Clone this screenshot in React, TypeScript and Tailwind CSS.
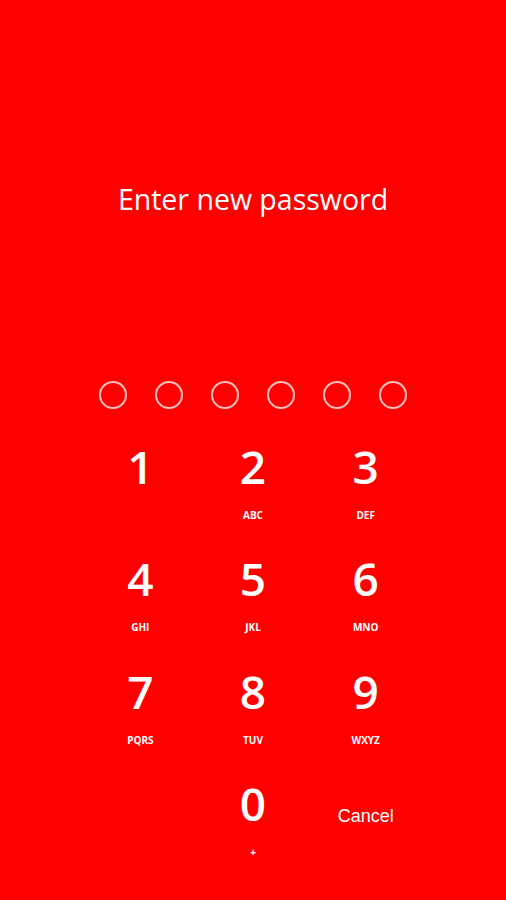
const keys: Array<{ digit: string; letters: string }> = [
  { digit: "1", letters: "" },
  { digit: "2", letters: "ABC" },
  { digit: "3", letters: "DEF" },
  { digit: "4", letters: "GHI" },
  { digit: "5", letters: "JKL" },
  { digit: "6", letters: "MNO" },
  { digit: "7", letters: "PQRS" },
  { digit: "8", letters: "TUV" },
  { digit: "9", letters: "WXYZ" },
];

function Key({ digit, letters }: { digit: string; letters: string }) {
  return (
    <button type="button" className="flex h-[112.67px] flex-col items-center text-white">
      <span className="text-[46px] font-semibold leading-[46px]">{digit}</span>
      <span className="mt-[20px] h-[12px] text-[10px] font-bold leading-[12px]">{letters}</span>
    </button>
  );
}

export default function App() {
  return (
    <div
      className="flex h-[900px] w-[506px] flex-col items-center bg-[#ff0000] text-white"
      style={{ fontFamily: '"Open Sans", "Noto Sans", sans-serif' }}
    >
      <h1 className="pt-[181px] text-[28.5px] font-normal leading-[36px]">Enter new password</h1>

      <div className="mt-[164px] flex gap-[28.2px]">
        {Array.from({ length: 6 }).map((_, i) => (
          <span key={i} className="h-[28px] w-[28px] rounded-full border-2 border-white/75" />
        ))}
      </div>

      <div className="mt-[33.5px] grid w-[338px] grid-cols-3">
        {keys.map((key) => (
          <Key key={key.digit} digit={key.digit} letters={key.letters} />
        ))}
        <div />
        <Key digit="0" letters="+" />
        <button
          type="button"
          className="flex h-[112.67px] flex-col items-center pt-[25.6px] text-[18px] leading-[20px] text-white"
          style={{ fontFamily: '"Liberation Sans", Arial, sans-serif' }}
        >
          Cancel
        </button>
      </div>
    </div>
  );
}
